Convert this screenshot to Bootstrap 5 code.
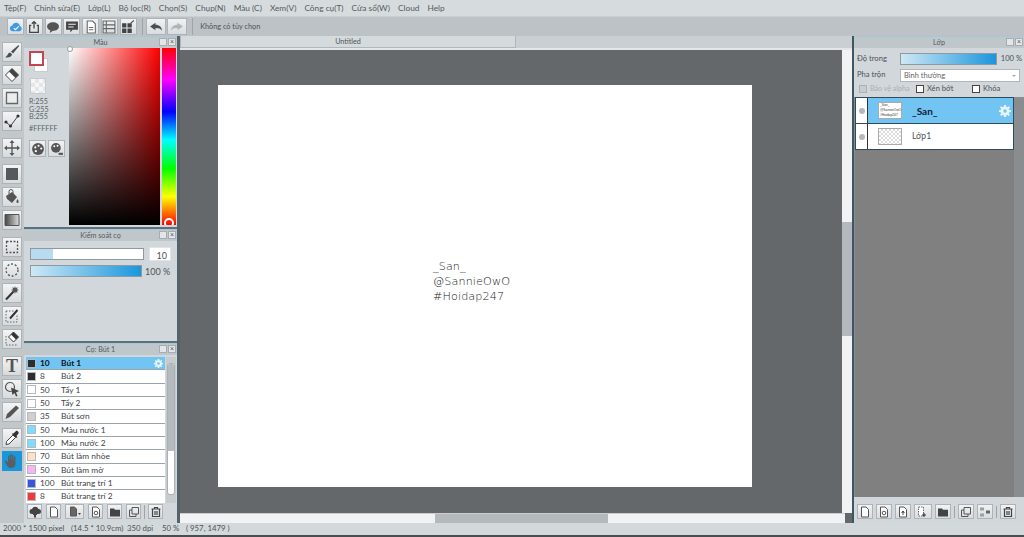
<!DOCTYPE html>
<html lang="vi"><head><meta charset="utf-8"><title>Paint</title>
<link href="https://cdn.jsdelivr.net/npm/bootstrap@5.3.0/dist/css/bootstrap.min.css" rel="stylesheet">
<style>
html,body{width:1024px;height:537px;overflow:hidden;margin:0}
body{font-family:Lato,"Noto Sans",sans-serif;font-size:8px;color:#4d5357;background:#d3d9db;line-height:1;white-space:nowrap}
.app{height:537px}
.menubar{height:16px;background:#d6dbdd;padding-left:4px;gap:8.05px;font-size:8.3px;align-items:center;color:#555b5f}
.topbar{height:20px;background:#bcc2c5;padding-left:7px;align-items:center;border-top:1px solid #c9ced1;font-size:7.3px}
.tb{width:17px;height:17px;background:linear-gradient(#f0f2f3,#d9dddf);border:1px solid #adb3b6;margin-right:1.8px;display:flex;align-items:center;justify-content:center;flex:none}
.tb svg{width:14px;height:14px}
.wide{width:20px}
.sep{width:1px;height:17px;background:#9ea4a7;margin:0 3px;flex:none}
.workspace{height:487px}
.tools{width:24px;background:#c2c8ca;padding:6px 0 0 2px;flex:none}
.tool{width:20px;height:20px;margin-bottom:3px;background:linear-gradient(#f3f4f5,#d7dbdd);border:1px solid #adb3b6;display:flex;align-items:center;justify-content:center}
.tool svg{width:16px;height:16px}
.tool.on{background:#1a96dc;border-color:#1a96dc}
.gap1{margin-top:7px}
.gap2{margin-top:6px}
.gtype{font:700 18px/18px "Liberation Serif",serif;color:#555}
.leftp{width:153px;flex:none;background:#d1d7da}
.phead{height:12px;background:#bfc7cb;border-top:1px solid #a8c6d6;position:relative;display:flex;align-items:center;justify-content:center;font-size:7.2px;color:#555b5f}
.pico{position:absolute;right:1px;top:1px;display:flex;gap:1px}
.pico i{display:block;width:8px;height:8px;background:#e2e6e8;border:1px solid #a6acaf;font:7px/6px "Liberation Sans",sans-serif;text-align:center;color:#555}
.colorp{height:193px;border-bottom:2px solid #5f7078}
.ctop{height:178px}
.cside{width:45px;padding:3px 0 0 5px;flex:none;font-size:7.2px;line-height:7.6px;color:#5d6367}
.swatches{height:27px;position:relative}
.sw1{position:absolute;left:0;top:0;width:15px;height:15px;background:#fff;border:2px solid #c4444f;z-index:1}
.sw2{position:absolute;left:5px;top:7px;width:14px;height:14px;background:#fff;border:1px solid #c8cccf}
.check{width:16px;height:16px;margin:0 0 4px 1px;border:1px solid #c5cacd;background:repeating-conic-gradient(#e4e6e7 0 25%,#f7f7f7 0 50%) 0 0/8px 8px}
.colbtns{margin-top:8px;gap:2px}
.colbtns .tb{width:17px;height:17px;margin:0}
.sv{width:91px;height:177px;background:linear-gradient(to bottom,transparent,#000),linear-gradient(to right,#fff,#f00);position:relative}
.sv::before{content:"";position:absolute;left:-2px;top:-2px;width:6px;height:6px;border-radius:50%;background:#fff;border:1px solid #999}
.hue{width:14px;height:177px;margin-left:2px;background:linear-gradient(#f00 0,#f0f 18%,#00f 36%,#0ff 52%,#0f0 68%,#ff0 84%,#f00 100%);position:relative;overflow:hidden}
.hue::after{content:"";position:absolute;left:2px;bottom:-3px;width:10px;height:10px;border-radius:50%;border:2px solid #fff}
.ctrlp{height:112px}
.bar{height:12px;border:1px solid #8d9a9f}
.numbox{width:22px;height:14px;background:#fff;text-align:right;padding:3px 3px 0 0;font-size:9px;border:1px solid #dfe3e4}
.r1{padding:6px 6px 0 6px;gap:5px;align-items:center}
.r2{padding:4px 0 0 6px;gap:3px;align-items:center;font-size:9px}
.fillb{background:linear-gradient(to right,#cfe8f5,#1a96dc)}
.brushp{height:182px;border-top:2px solid #5f7078}
.blist{width:139px;margin-left:2px;flex:none;height:146px;overflow:hidden;font-size:8.4px;color:#3d4347}
.brow{height:13.35px;background:#fff;border-bottom:1px solid #9aa3a7;align-items:center;position:relative}
.brow b{display:block;width:9px;height:9px;margin:0 4px 0 1px;flex:none;border:1px solid #b5babc}
.brow span{width:21px;flex:none}
.brow.on{background:#72c5f3;color:#111;font-weight:700}
.gear{position:absolute;right:2px;top:2px;width:9px;height:9px}
.bscroll{width:10px;margin-left:1px;background:#c6ccce;padding:6px 1px 8px;height:146px;flex:none}
.bscroll div{height:100%;background:#fff;border-radius:3px;border:1px solid #aab0b3;overflow:hidden}
.bscroll i{display:block;height:87px;background:#b4babd}
.bwrap{padding-top:2px}
.btnrow{padding:1px 0 0 3px;align-items:center;gap:4px}
.btnrow .tb{width:15px;height:15px;margin:0}
.btnrow svg{width:12px;height:12px}
.btnrow .wide{width:19px}
.btnrow .sep{margin:0 -1px;height:14px}
.mid{width:675px;flex:none;border-left:3px solid #55626a;background:#5f6367}
.tabs{height:14px;background:#c9cfd2;border-bottom:2px solid #e2e6e7}
.tab{width:336px;height:12px;background:#d5dadc;border:1px solid #b0b6b9;border-top:0;display:flex;align-items:center;justify-content:center;font-size:7.2px;padding-top:1px}
.view{height:473px;background:#65686b}
.vport{width:662px;height:463px;padding:35px 0 0 38px;flex:none}
.paper{width:534px;height:402px;background:#fff;padding:174px 0 0 215px;font:300 11.2px/15px "DejaVu Sans",sans-serif;color:#222;letter-spacing:.1px}
.vs{width:10px;height:463px;background:#f0f2f3;padding-top:172px;flex:none}
.vs div{height:114px;background:#b3b9bc}
.hs{width:665px;height:10px;background:#f0f2f3;padding-left:255px;border-top:1px solid #ccc}
.hs div{width:173px;height:9px;background:#b3b9bc}
.rightp{width:172px;flex:none;border-left:2px solid #3f555f;background:#d1d7da}
.opts{height:49px;padding:3px 2px 0 3px;font-size:7.6px}
.orow{height:16px;align-items:center}
.orow label{width:43px;flex:none}
.sel{width:121px;height:13px;background:#fff;border:1px solid #b0b6b9;padding:2px 3px;color:#666;position:relative;font-size:7.5px;margin-right:2px}
.sel::after{content:"";position:absolute;right:3px;top:5px;border:2px solid transparent;border-top-color:#aaa}
.chk{align-items:center;margin-top:2px;padding-left:2px}
.chk i{width:8px;height:8px;border:1px solid #444;background:#fff;margin-right:3px;flex:none;display:block}
.chk .dis{color:#aab0b3;font-size:7.1px}
.chk .dis i{border-color:#aab0b3;background:#c8cdd0}
.layerswrap{height:400px;background:#8a8d8f}
.layers{width:159px;margin-left:1px;flex:none;background:#808080;height:400px}
.lay{height:27px;border:1px solid #2f4a5a;display:flex;align-items:center;background:#fff;position:relative;font-size:8.6px;margin-bottom:-1px}
.lay .eye{width:12px;height:100%;background:#fff;border-right:1px solid #333;display:flex;align-items:center;justify-content:center;flex:none}
.lay .eye i{display:block;width:6px;height:6px;background:#b4b8ba;border-radius:50%}
.lay .th{width:24px;height:17px;margin:0 10px;border:1px solid #aaa;flex:none;background:repeating-conic-gradient(#dcdcdc 0 25%,#fff 0 50%) 0 0/4px 4px}
.lay.on{background:#72c5f3;font-weight:700;color:#123;font-size:10px}
.lay.on .th{background:#fff;font:3.3px/5px "Liberation Sans",sans-serif;color:#333;padding:0 1px}
.lay .gear{right:2px;top:7px;width:12px;height:12px}
.rbtm{padding:7px 0 0 3px;gap:3px;align-items:center}
.rbtm .tb{width:16px;height:15px;margin:0}
.rbtm svg{width:12px;height:12px}
.rbtm .wide{width:18px}
.rbtm .sep{margin:0;height:12px}
.status{height:12px;align-items:center;padding-left:3px;font-size:7.8px;background:#d3d9db;color:#4d5357}
.st1{width:68px}.st2{width:56px}.st3{width:35px}.st4{width:24px}
.foot{height:2px;background:#4a4d50}
</style></head><body>
<svg width="0" height="0" class="position-absolute"><defs>
<symbol id="gear" viewBox="0 0 12 12"><path fill="#e8f4fb" d="M5 0h2l.3 1.700 1.200.5L10 1.200 11 2.600 9.800 3.900l.4 1.100L12 5.200v1.800l-1.800.3-.4 1.100L11 9.700 9.800 11 8.500 9.900l-1.200.4L7 12H5l-.3-1.700-1.200-.4L2.200 11 1 9.700l1.200-1.300-.4-1.100L0 7V5.200l1.800-.2.400-1.100L1 2.600 2.200 1.200l1.300 1 1.200-.5z"/><circle cx="6" cy="6" r="1.700" fill="#72c5f3"/></symbol>
<symbol id="doc" viewBox="0 0 12 12"><path fill="#fff" stroke="#555" d="M2.500 1h4.500l2.500 2.500V11h-7z"/></symbol>
<symbol id="folder" viewBox="0 0 12 12"><path fill="#444" d="M1 2.500h4l1 1.200h5V10.500H1z"/></symbol>
<symbol id="trash" viewBox="0 0 12 12"><path fill="none" stroke="#444" stroke-width="1.200" d="M1.500 3h9M4.500 3V1.500h3V3M2.500 3v7.500h7V3M5 5v4M7 5v4"/></symbol>
<symbol id="copy" viewBox="0 0 12 12"><path fill="none" stroke="#555" d="M4 1.500h6.500V8H4zM1.500 4H4M1.500 4v6.500H8V8"/></symbol>
<symbol id="docs" viewBox="0 0 12 12"><path fill="#fff" stroke="#555" d="M2.500 1h4.500l2.500 2.500V11h-7z"/><circle cx="6" cy="7" r="1.800" fill="none" stroke="#555"/></symbol>
<symbol id="merge" viewBox="0 0 12 12"><path fill="#9aa0a3" d="M1 1.500h4v3H1zM1 7.500h4v3H1z"/><path fill="#666" d="M7 4.500h4v3H7z"/></symbol>
<symbol id="brush" viewBox="0 0 16 16"><path fill="#4a4f52" d="M14.500 1 7 7.500 9 9.500 15.200 2zM6 8.500c-2 .2-1.800 2.800-4.800 4.800 3 .8 6.300 0 6.800-3z"/></symbol>
<symbol id="eraser" viewBox="0 0 16 16"><path fill="#fff" stroke="#444" d="M8 1.500 14.500 8 8 14.500 1.500 8z"/><path fill="#444" d="M5 4.500 8 1.500 14.500 8 11.500 11z"/></symbol>
<symbol id="square" viewBox="0 0 16 16"><path fill="#eceeee" stroke="#666" stroke-width="1.300" d="M2.500 2.500h11v11h-11z"/></symbol>
<symbol id="poly" viewBox="0 0 16 16"><path fill="none" stroke="#3f4447" d="M2 9 6.500 13 14 3"/><circle cx="2" cy="9" r="1.600" fill="#333"/><circle cx="6.500" cy="13" r="1.600" fill="#333"/><circle cx="14" cy="3" r="1.600" fill="#333"/></symbol>
<symbol id="move" viewBox="0 0 16 16"><path fill="none" stroke="#555" stroke-width="1.300" d="M8 1v14M1 8h14"/><path fill="#555" d="M8 0l2.500 3h-5zM8 16l2.500-3h-5zM0 8l3-2.500v5zM16 8l-3-2.500v5z"/></symbol>
<symbol id="fillsq" viewBox="0 0 16 16"><path fill="#55595c" d="M2 2h12v12H2z"/></symbol>
<symbol id="bucket" viewBox="0 0 16 16"><path fill="#555" d="M2 7 8 3l5 5-5 6-5-4z"/><path fill="none" stroke="#555" d="M5 5V2.500a2 2 0 0 1 4 0V5"/><path fill="#555" d="M13.500 10c1.500 2 1.500 4 0 4s-1.500-2 0-4z"/></symbol>
<symbol id="grad" viewBox="0 0 16 16"><defs><linearGradient id="gg"><stop offset="0" stop-color="#444"/><stop offset="1" stop-color="#ddd"/></linearGradient></defs><path fill="url(#gg)" stroke="#555" d="M1 2.500h14v11H1z"/></symbol>
<symbol id="marq" viewBox="0 0 16 16"><path fill="none" stroke="#555" stroke-width="1.300" stroke-dasharray="2 1.500" d="M2.500 2.500h11v11h-11z"/></symbol>
<symbol id="lasso" viewBox="0 0 16 16"><circle cx="8" cy="8" r="6" fill="none" stroke="#555" stroke-width="1.300" stroke-dasharray="2 1.800"/></symbol>
<symbol id="wand" viewBox="0 0 16 16"><path stroke="#333" stroke-width="2" d="M2 14.500 10 6"/><path fill="#555" d="M11 1l.7 2 2-.7-.7 2 2 .7-2 .7.7 2-2-.7L11 9l-.7-2-2 .7.7-2-2-.7 2-.7-.7-2 2 .7z"/></symbol>
<symbol id="selpen" viewBox="0 0 16 16"><path fill="none" stroke="#666" stroke-dasharray="1.500 1.500" d="M2 3h9M2 3v11h11V7"/><path stroke="#333" stroke-width="2" d="M6 10.500 13.500 2"/></symbol>
<symbol id="selera" viewBox="0 0 16 16"><path fill="none" stroke="#666" stroke-dasharray="1.500 1.500" d="M2 5v9h11"/><path fill="#fff" stroke="#333" d="M9.500 1 14.500 6 9.500 11 4.500 6z"/><path fill="#333" d="M7 3.500 9.500 1 14.500 6 12 8.500z"/></symbol>
<symbol id="arrowsel" viewBox="0 0 16 16"><circle cx="6" cy="6" r="4.500" fill="none" stroke="#555" stroke-width="1.200"/><path fill="#444" d="M7 6.500 15 10l-3 1.500L13.500 15l-1.500.5-1.500-3.500-2 2z"/></symbol>
<symbol id="pen" viewBox="0 0 16 16"><path fill="#555" d="M12 1.500 15 4 6 13l-4.500 2L3 10z"/></symbol>
<symbol id="pick" viewBox="0 0 16 16"><path fill="#fff" stroke="#444" d="m9 5 2.500 2.500L5 14l-3 .5.500-3z"/><path fill="#333" d="M9.500 3.500 12 1c1-1 3.500 1.500 2.500 2.500L12.500 6l1 1-1.500 1-4-4 1-1z"/></symbol>
<symbol id="hand" viewBox="0 0 16 16"><path fill="#5a5f62" d="M4 3c0-1 1.500-1 1.500 0v3h.5V1.800c0-1 1.500-1 1.500 0V6h.5V2.500c0-1 1.500-1 1.500 0V7h.5V4c0-1 1.500-1 1.500 0v6.500c0 3-2 4.500-4.500 4.500-2 0-3-1-4-2.500L1 9c-.7-1 .7-2 1.500-1L4 9.500z"/></symbol>
</defs></svg>
<div class="app d-flex flex-column">
<div class="menubar d-flex"><span>Tệp(F)</span><span>Chỉnh sửa(E)</span><span>Lớp(L)</span><span>Bộ lọc(R)</span><span>Chọn(S)</span><span>Chụp(N)</span><span>Màu (C)</span><span>Xem(V)</span><span>Công cụ(T)</span><span>Cửa sổ(W)</span><span>Cloud</span><span>Help</span></div>
<div class="topbar d-flex">
<div class="tb"><svg viewBox="0 0 13 13"><path fill="#3f9be0" d="M3 10.500a2.800 2.800 0 0 1 0-5.500 3.600 3.600 0 0 1 7 .5 2.600 2.600 0 0 1 0 5z"/><path fill="none" stroke="#fff" d="m4.500 7.500 1.500 1.500 3-3"/></svg></div>
<div class="tb"><svg viewBox="0 0 13 13"><path fill="none" stroke="#444" stroke-width="1.200" d="M4 5H2.500v6.500h8V5H9M6.500 8V1.500M4.500 3.500l2-2 2 2"/></svg></div>
<div class="tb"><svg viewBox="0 0 13 13"><path fill="#555" d="M6.500 2c3 0 5.500 1.500 5.500 4s-2.500 4-5.500 4l-3 2 .5-2.500C2 9 1 7.500 1 6c0-2.500 2.500-4 5.500-4z"/></svg></div>
<div class="tb"><svg viewBox="0 0 13 13"><path fill="#444" d="M1 1.500h11V9H7l-2 2.500V9H1z"/><path stroke="#eee" d="M3 4h7M3 6.500h5"/></svg></div>
<div class="tb"><svg viewBox="0 0 13 13"><path fill="#fff" stroke="#666" d="M3 1h5l2.500 2.500V12H3z"/><path stroke="#666" d="M4.500 7h4M4.500 9h4"/></svg></div>
<div class="tb"><svg viewBox="0 0 13 13"><path fill="none" stroke="#666" d="M1 1h11v11H1zM1 4.500h11M1 8h11M4 1v11"/></svg></div>
<div class="tb"><svg viewBox="0 0 13 13"><path fill="#444" d="M1 3h4v4H1zM6 3h4v4H6zM1 8h4v4H1zM6 8h4v4H6z"/><path stroke="#555" d="m9 3 3-2.500"/></svg></div>
<div class="sep"></div>
<div class="tb wide"><svg viewBox="0 0 13 13"><path fill="#4a4f52" d="M6 2.500 1 6l5 3.500V7.500c3 0 5 .7 6 2.500 0-3.500-2.500-5.500-6-5.500z"/></svg></div>
<div class="tb wide"><svg viewBox="0 0 13 13"><path fill="#b0b5b8" d="M7 2.500 12 6 7 9.500V7.500c-3 0-5 .7-6 2.500 0-3.500 2.500-5.500 6-5.500z"/></svg></div>
<div class="sep"></div>
<span class="ms-1">Không có tùy chọn</span>
</div>
<div class="workspace d-flex">
<div class="tools">
<div class="tool"><svg><use href="#brush"/></svg></div><div class="tool"><svg><use href="#eraser"/></svg></div><div class="tool"><svg><use href="#square"/></svg></div><div class="tool"><svg><use href="#poly"/></svg></div>
<div class="tool gap1"><svg><use href="#move"/></svg></div>
<div class="tool gap2"><svg><use href="#fillsq"/></svg></div><div class="tool"><svg><use href="#bucket"/></svg></div><div class="tool"><svg><use href="#grad"/></svg></div>
<div class="tool gap1"><svg><use href="#marq"/></svg></div><div class="tool"><svg><use href="#lasso"/></svg></div><div class="tool"><svg><use href="#wand"/></svg></div><div class="tool"><svg><use href="#selpen"/></svg></div><div class="tool"><svg><use href="#selera"/></svg></div>
<div class="tool gap1 gtype">T</div><div class="tool"><svg><use href="#arrowsel"/></svg></div><div class="tool"><svg><use href="#pen"/></svg></div>
<div class="tool gap2"><svg><use href="#pick"/></svg></div><div class="tool on"><svg><use href="#hand"/></svg></div>
</div>
<div class="leftp">
<div class="colorp">
<div class="phead">Màu<div class="pico"><i></i><i>×</i></div></div>
<div class="ctop d-flex">
<div class="cside">
<div class="swatches"><div class="sw1"></div><div class="sw2"></div></div>
<div class="check"></div>
<div>R:255<br>G:255<br>B:255</div><div class="mt-1">#FFFFFF</div>
<div class="colbtns d-flex"><div class="tb"><svg viewBox="0 0 13 13"><circle cx="6.500" cy="6.500" r="5.500" fill="#555"/><circle cx="4" cy="5" r="1" fill="#fff"/><circle cx="7" cy="3.500" r="1" fill="#fff"/><circle cx="9.500" cy="6" r="1" fill="#fff"/><circle cx="4.500" cy="8.500" r="1" fill="#fff"/></svg></div><div class="tb"><svg viewBox="0 0 13 13"><circle cx="5.500" cy="5.500" r="4.500" fill="#555"/><circle cx="4" cy="4" r=".9" fill="#fff"/><circle cx="7" cy="3.500" r=".9" fill="#fff"/><path fill="#555" d="M8 10h4v2H8z"/></svg></div></div>
</div>
<div class="sv"></div><div class="hue"></div>
</div>
</div>
<div class="ctrlp">
<div class="phead">Kiểm soát cọ<div class="pico"><i></i><i>×</i></div></div>
<div class="d-flex r1"><div class="bar flex-grow-1 bg-white"><div class="h-100" style="width:20%;background:#b7dcf0"></div></div><div class="numbox">10</div></div>
<div class="d-flex r2"><div class="bar fillb" style="width:112px"></div><span>100 %</span></div>
</div>
<div class="brushp">
<div class="phead">Cọ: Bút 1<div class="pico"><i></i><i>×</i></div></div>
<div class="d-flex bwrap">
<div class="blist">
<div class="brow on d-flex"><b style="background:#2b2f33"></b><span>10</span>Bút 1<svg class="gear"><use href="#gear"/></svg></div>
<div class="brow d-flex"><b style="background:#2b2f33"></b><span>8</span>Bút 2</div>
<div class="brow d-flex"><b style="background:#fff"></b><span>50</span>Tẩy 1</div>
<div class="brow d-flex"><b style="background:#fff"></b><span>50</span>Tẩy 2</div>
<div class="brow d-flex"><b style="background:#cfcfcf"></b><span>35</span>Bút sơn</div>
<div class="brow d-flex"><b style="background:#7fdcff"></b><span>50</span>Màu nước 1</div>
<div class="brow d-flex"><b style="background:#7fdcff"></b><span>100</span>Màu nước 2</div>
<div class="brow d-flex"><b style="background:#ffe0c4"></b><span>70</span>Bút làm nhòe</div>
<div class="brow d-flex"><b style="background:#f9b4f4"></b><span>50</span>Bút làm mờ</div>
<div class="brow d-flex"><b style="background:#3a54e0"></b><span>100</span>Bút trang trí 1</div>
<div class="brow d-flex"><b style="background:#f03a3a"></b><span>8</span>Bút trang trí 2</div>
</div>
<div class="bscroll"><div><i></i></div></div>
</div>
<div class="btnrow d-flex">
<div class="tb"><svg viewBox="0 0 12 12"><path fill="#444" d="M3 8a2.500 2.500 0 0 1 0-5 3.500 3.500 0 0 1 6.500 0 2.500 2.500 0 0 1 0 5zM4 8h4v1H7v2.500H5V9H4z"/></svg></div>
<div class="tb"><svg><use href="#doc"/></svg></div>
<div class="tb wide"><svg viewBox="0 0 12 12"><path fill="#666" stroke="#555" d="M1.500 1h4l2 2v7h-6z"/><path fill="#444" d="M9 7h3l-1.500 2z"/></svg></div>
<div class="tb"><svg><use href="#docs"/></svg></div>
<div class="tb"><svg><use href="#folder"/></svg></div>
<div class="tb"><svg><use href="#copy"/></svg></div>
<div class="sep"></div>
<div class="tb"><svg><use href="#trash"/></svg></div>
</div>
</div>
</div>
<div class="mid">
<div class="tabs"><div class="tab">Untitled</div></div>
<div class="view">
<div class="d-flex"><div class="vport"><div class="paper">_San_<br>@SannieOwO<br>#Hoidap247</div></div><div class="vs"><div></div></div></div>
<div class="d-flex"><div class="hs"><div></div></div></div>
</div>
</div>
<div class="rightp">
<div class="phead">Lớp<div class="pico"><i></i><i>×</i></div></div>
<div class="opts">
<div class="orow d-flex"><label>Độ trong</label><div class="bar fillb" style="width:99px"></div><span class="ms-1">100 %</span></div>
<div class="orow d-flex"><label>Pha trộn</label><div class="sel">Bình thường</div></div>
<div class="chk d-flex"><span class="dis d-flex align-items-center" style="width:57px"><i></i>Bảo vệ alpha</span><span class="d-flex align-items-center" style="width:56px"><i></i>Xén bớt</span><span class="d-flex align-items-center"><i></i>Khóa</span></div>
</div>
<div class="layerswrap d-flex">
<div class="layers">
<div class="lay on"><div class="eye"><i></i></div><div class="th">_San_<br>@SannieOwO<br>#Hoidap247</div>_San_<svg class="gear"><use href="#gear"/></svg></div>
<div class="lay"><div class="eye"><i></i></div><div class="th"></div>Lớp1</div>
</div>
</div>
<div class="rbtm d-flex">
<div class="tb"><svg><use href="#doc"/></svg></div><div class="tb"><svg><use href="#docs"/></svg></div><div class="tb"><svg viewBox="0 0 12 12"><path fill="#fff" stroke="#555" d="M2.500 1h4.500l2.500 2.500V11h-7z"/><path stroke="#555" d="M6 9V5M4.500 6.500 6 5l1.500 1.500"/></svg></div>
<div class="tb wide"><svg viewBox="0 0 12 12"><path fill="#fff" stroke="#666" stroke-dasharray="1.500 1" d="M1.500 1h5v9h-5z"/><path stroke="#333" d="M5 9h4M7 7v4"/></svg></div>
<div class="tb"><svg><use href="#folder"/></svg></div><div class="sep"></div>
<div class="tb"><svg><use href="#copy"/></svg></div><div class="tb"><svg><use href="#merge"/></svg></div><div class="sep"></div>
<div class="tb"><svg><use href="#trash"/></svg></div>
</div>
</div>
</div>
<div class="status d-flex"><span class="st1">2000 * 1500 pixel</span><span class="st2">(14.5 * 10.9cm)</span><span class="st3">350 dpi</span><span class="st4">50 %</span><span>( 957, 1479 )</span></div>
<div class="foot"></div>
</div>
</body></html>
